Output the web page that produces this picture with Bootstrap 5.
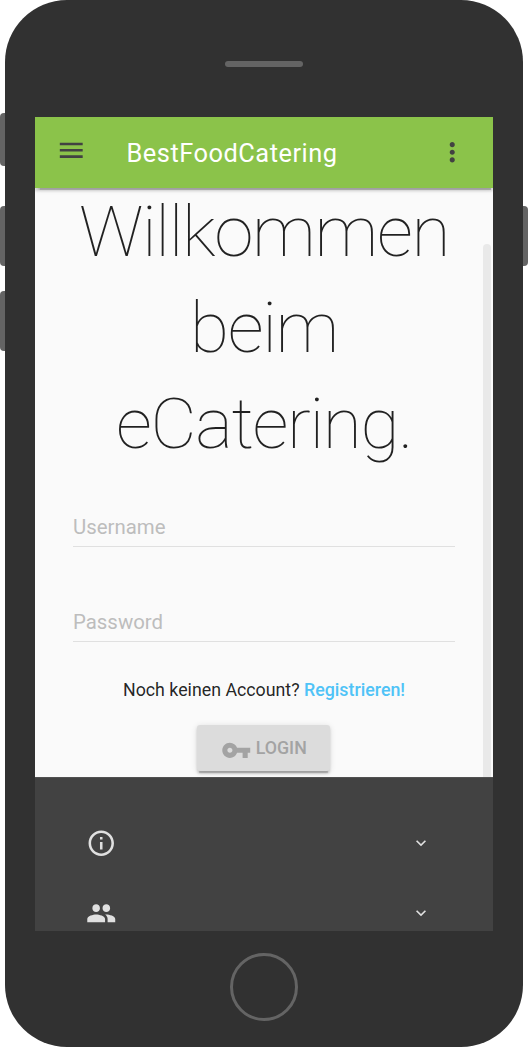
<!DOCTYPE html>
<html lang="de">
<head>
<meta charset="utf-8">
<meta name="viewport" content="width=device-width, initial-scale=1">
<title>BestFoodCatering</title>
<link rel="stylesheet" href="https://cdn.jsdelivr.net/npm/bootstrap@5.3.0/dist/css/bootstrap.min.css">
<style>
  body { font-family: Roboto, "Liberation Sans", sans-serif; background: #fff; color: rgba(0,0,0,.87); }
  svg { fill: currentColor; flex: none; display: block; }
  .phone { width: 518px; height: 1047px; margin-left: 5px; background: #313131; border-radius: 62px; }
  .side-key { width: 5px; height: 60px; background: #646464; border-radius: 4px 0 0 4px; left: -5px; top: 206px; }
  .side-key.mute { top: 113px; height: 53px; }
  .side-key.down { top: 291px; }
  .side-key.power { left: auto; right: -5px; border-radius: 0 4px 4px 0; }
  .phone-top { height: 117px; padding-top: 61px; }
  .speaker { width: 78px; height: 6px; border-radius: 3px; background: #646464; }
  .screen { width: 458px; height: 814px; background: #fafafa; }
  .app-bar { height: 71px; background: #8bc34a; color: #424242; padding: 0 25.5px 0 20.5px; z-index: 2;
    box-shadow: 0 2.5px 2.5px rgba(0,0,0,.14), 0 4px 1px -2.5px rgba(0,0,0,.2), 0 1px 6px rgba(0,0,0,.12); }
  .app-bar svg { width: 30.5px; height: 30.5px; }
  .app-title { font-size: 25.4px; letter-spacing: .51px; line-height: 26px; margin-left: 40.5px; color: #fff; }
  .content-area { display: flow-root; height: 589px; padding: 0 38px; }
  .welcome { font-size: 71.2px; font-weight: 100; line-height: 96.1px; letter-spacing: -1.36px; margin: -4px 0 0; }
  .text-entry { height: 37px; font-size: 20.4px; line-height: 30px; padding: 0 0 2px; border: 0; border-bottom: 1px solid #e0e0e0;
    border-radius: 0; background: transparent; }
  .text-entry::placeholder { color: #bdbdbd; opacity: 1; }
  .text-entry.user { margin-top: 38px; }
  .text-entry.pass { margin-top: 58px; }
  .signup { font-size: 17.8px; line-height: 30px; margin-top: 33px; }
  .signup a { color: #4fc3f7; font-weight: 500; }
  .login { width: 133px; height: 46px; margin: 20px 0 0 124px; border: 0; border-radius: 3px; background: #dcdcdc; color: #a3a3a3;
    font-size: 17.8px; font-weight: 500; line-height: 46px; padding: 0 0 0 1px;
    box-shadow: 0 2.5px 2.5px rgba(0,0,0,.14), 0 4px 1px -2.5px rgba(0,0,0,.2), 0 1px 6px rgba(0,0,0,.12); }
  .scroll-thumb { width: 8px; height: 533px; right: 2px; bottom: 0; background: #e9e9e9; border-radius: 4px 4px 0 0; }
  .app-foot { height: 154px; background: #424242; border-top: 1px solid #515151; color: #e0e0e0; padding: 30px 62px 0 51px; }
  .foot-row { height: 70px; }
  .home { width: 68px; height: 68px; border: 3px solid #646464; border-radius: 50%; margin-top: 22px; }
</style>
</head>
<body>
<main class="phone position-relative">
  <i class="side-key mute position-absolute"></i>
  <i class="side-key position-absolute"></i>
  <i class="side-key down position-absolute"></i>
  <i class="side-key power position-absolute"></i>
  <div class="phone-top"><div class="speaker mx-auto"></div></div>
  <div class="screen mx-auto overflow-hidden">
    <header class="app-bar d-flex align-items-center position-relative">
      <svg class="menu-icon mb-1" viewBox="0 0 24 24"><path d="M3 18h18v-2H3v2zm0-5h18v-2H3v2zm0-7v2h18V6H3z"/></svg>
      <div class="app-title">BestFoodCatering</div>
      <svg class="ms-auto" viewBox="0 0 24 24"><path d="M12 8c1.100 0 2-.9 2-2s-.9-2-2-2-2 .9-2 2 .9 2 2 2zm0 2c-1.100 0-2 .9-2 2s.9 2 2 2 2-.9 2-2-.9-2-2-2zm0 6c-1.100 0-2 .9-2 2s.9 2 2 2 2-.9 2-2-.9-2-2-2z"/></svg>
    </header>
    <section class="content-area position-relative text-center">
      <h1 class="welcome">Willkommen<br>beim<br>eCatering.</h1>
      <form>
        <input class="form-control text-entry user" type="text" placeholder="Username" aria-label="Username">
        <input class="form-control text-entry pass" type="password" placeholder="Password" aria-label="Password">
        <div class="signup">Noch keinen Account? <a class="text-decoration-none" href="#">Registrieren!</a></div>
        <button class="login d-flex align-items-center justify-content-center" type="button">
          <svg class="me-1 mt-1" width="30.5" height="30.5" viewBox="0 0 24 24"><path d="M12.650 10C11.830 7.670 9.610 6 7 6c-3.310 0-6 2.690-6 6s2.690 6 6 6c2.610 0 4.830-1.670 5.650-4H17v4h4v-4h2v-4H12.650zM7 14c-1.100 0-2-.9-2-2s.9-2 2-2 2 .9 2 2-.9 2-2 2z"/></svg>LOGIN
        </button>
      </form>
      <div class="scroll-thumb position-absolute"></div>
    </section>
    <footer class="app-foot position-relative">
      <div class="foot-row d-flex align-items-center justify-content-between">
        <svg width="30.5" height="30.5" viewBox="0 0 24 24"><path d="M11 17h2v-6h-2v6zm1-15C6.480 2 2 6.480 2 12s4.480 10 10 10 10-4.480 10-10S17.520 2 12 2zm0 18c-4.410 0-8-3.590-8-8s3.590-8 8-8 8 3.590 8 8-3.590 8-8 8zM11 9h2V7h-2v2z"/></svg>
        <svg width="20" height="20" viewBox="0 0 24 24"><path d="M16.590 8.590L12 13.170 7.410 8.590 6 10l6 6 6-6z"/></svg>
      </div>
      <div class="foot-row d-flex align-items-center justify-content-between">
        <svg width="30.5" height="30.5" viewBox="0 0 24 24"><path d="M16 11c1.660 0 2.990-1.340 2.990-3S17.660 5 16 5c-1.660 0-3 1.340-3 3s1.340 3 3 3zm-8 0c1.660 0 2.990-1.340 2.990-3S9.660 5 8 5C6.340 5 5 6.340 5 8s1.340 3 3 3zm0 2c-2.330 0-7 1.170-7 3.500V19h14v-2.500c0-2.330-4.670-3.500-7-3.500zm8 0c-.29 0-.62.020-.97.050 1.160.84 1.970 1.970 1.970 3.450V19h6v-2.500c0-2.330-4.670-3.500-7-3.500z"/></svg>
        <svg width="20" height="20" viewBox="0 0 24 24"><path d="M16.590 8.590L12 13.170 7.410 8.590 6 10l6 6 6-6z"/></svg>
      </div>
    </footer>
  </div>
  <div class="home mx-auto"></div>
</main>
<script src="https://cdn.jsdelivr.net/npm/bootstrap@5.3.0/dist/js/bootstrap.bundle.min.js"></script>
</body>
</html>
